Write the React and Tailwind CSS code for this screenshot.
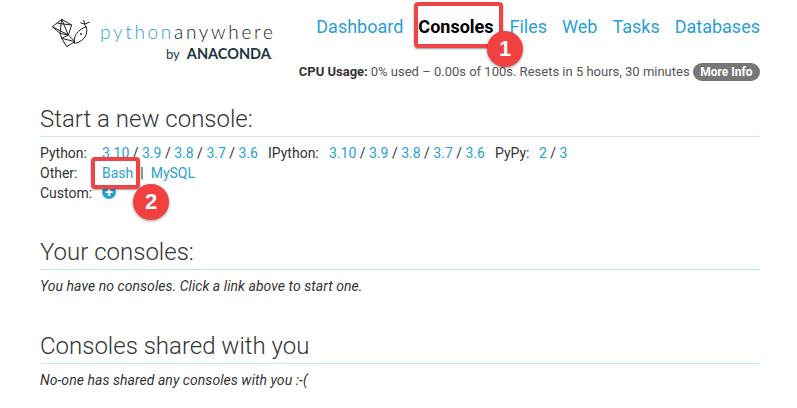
import React from 'react';

const link = 'text-[#2a9fd6]';

function Logo() {
  return (
    <div className="w-[240px] shrink-0 ml-[5px] pt-[10px]">
      <div className="flex items-start h-[45px]">
        <svg width="60" height="45" viewBox="0 0 180 135" fill="none" stroke="#222" strokeWidth="3" strokeLinejoin="round" className="shrink-0">
          <path d="M22 50 L50 28 L80 45 L70 75 L45 70 Z" />
          <path d="M50 28 L45 70 M22 50 L70 75 M80 45 L38 40 M50 28 L70 75" />
          <path d="M45 70 L50 85 L70 75 M50 85 L65 110 L90 95 L70 75 M50 85 L90 95" />
          <path d="M88 100 C84 78 100 58 124 50 C130 72 118 95 88 100 Z" />
          <path d="M122 52 L116 30 M120 42 L134 36 M118 42 L106 38" />
          <circle cx="108" cy="72" r="3" fill="#222" stroke="none" />
        </svg>
        <span className="-ml-[5px] mt-[10px] text-[19px] leading-[24px] tracking-[2.7px] font-light font-['Lato',sans-serif] text-[#2a9fd6]">
          python<span className="text-[#222]">anywhere</span>
        </span>
      </div>
      <div className="flex items-baseline -mt-[9px] pl-[121px] font-['Lato',sans-serif] text-[#1d3540]">
        <span className="text-[13px] leading-[16px]">by</span>
        <span className="ml-[7px] text-[14.5px] leading-[16px] font-bold">ANACONDA</span>
        <span className="text-[8px]">.</span>
      </div>
    </div>
  );
}

function Header() {
  return (
    <div className="flex justify-between h-[103px]">
      <Logo />
      <div className="flex flex-col items-end">
        <nav className="flex gap-[15px] pt-[14px] text-[18px] leading-[26px] text-[#2a9fd6]">
          <a>Dashboard</a>
          <a className="font-bold text-black mr-[1px]">Consoles</a>
          <a>Files</a>
          <a>Web</a>
          <a>Tasks</a>
          <a>Databases</a>
        </nav>
        <div className="flex items-center mt-[23px] text-[13px] leading-[18px] text-[#555] whitespace-nowrap">
          <b className="font-bold text-[#333]">CPU Usage:</b>
          <span className="ml-[3px]">0% used – 0.00s of 100s. Resets in 5 hours, 30 minutes</span>
          <span className="ml-[3px] rounded-full bg-[#777] text-white text-[12px] font-bold px-[7.5px] h-[18px] leading-[18px]">More Info</span>
        </div>
      </div>
    </div>
  );
}

function Versions({ items }) {
  return items.map((v, i) => (
    <React.Fragment key={v}>
      {i > 0 && ' / '}
      <a className={link}>{v}</a>
    </React.Fragment>
  ));
}

function Heading({ children }) {
  return (
    <h2 className="text-[24px] leading-[32px] font-light text-[#333] border-b border-[#bde9ff] pb-[1px] mb-[6px]">
      {children}
    </h2>
  );
}

function Badge({ n, className }) {
  return (
    <div className={`absolute w-[36px] h-[36px] rounded-full bg-[#f04040] text-white text-[22px] font-bold flex items-center justify-center font-['Liberation_Sans',sans-serif] shadow-[0_1px_3px_rgba(0,0,0,0.4)] ${className}`}>
      {n}
    </div>
  );
}

export default function App() {
  return (
    <div className="relative w-[797px] h-[408px] overflow-hidden bg-white pl-[40px] font-['Roboto',sans-serif] text-[14px] leading-[20px] text-[#333]">
      <div className="w-[720px]">
        <Header />

        <Heading>Start a new console:</Heading>
        <div className="flex">
          <span className="w-[62px]">Python:</span>
          <span><Versions items={['3.10', '3.9', '3.8', '3.7', '3.6']} /></span>
          <span className="ml-[10px] w-[61px]">IPython:</span>
          <span><Versions items={['3.10', '3.9', '3.8', '3.7', '3.6']} /></span>
          <span className="ml-[10px] w-[44px]">PyPy:</span>
          <span><Versions items={['2', '3']} /></span>
        </div>
        <div className="flex">
          <span className="w-[62px]">Other:</span>
          <a className={link}>Bash</a>
          <span className="mx-[7px]">|</span>
          <a className={link}>MySQL</a>
        </div>
        <div className="flex items-center">
          <span className="w-[62px]">Custom:</span>
          <span className="-mt-[2px] w-[14px] h-[14px] rounded-full bg-[#2a9fd6] text-white text-[14px] font-bold leading-none flex items-center justify-center">+</span>
        </div>

        <div className="mt-[33px]">
          <Heading>Your consoles:</Heading>
          <p className="italic tracking-[0.05px]">You have no consoles. Click a link above to start one.</p>
        </div>
        <div className="mt-[34px]">
          <Heading>Consoles shared with you</Heading>
          <p className="italic tracking-[0.05px]">No-one has shared any consoles with you :-(</p>
        </div>
      </div>

      {/* annotations over the page */}
      <div className="absolute left-[414px] top-[2px] w-[89px] h-[46px] rounded-[4px] border-[4px] border-[#ef4444] shadow-[0_1px_2px_rgba(0,0,0,0.4)]" />
      <Badge n="1" className="left-[487px] top-[31px]" />
      <div className="absolute left-[91px] top-[157px] w-[49px] h-[32px] rounded-[4px] border-[4px] border-[#ef4444] shadow-[0_1px_2px_rgba(0,0,0,0.4)]" />
      <Badge n="2" className="left-[133px] top-[184px]" />
    </div>
  );
}
